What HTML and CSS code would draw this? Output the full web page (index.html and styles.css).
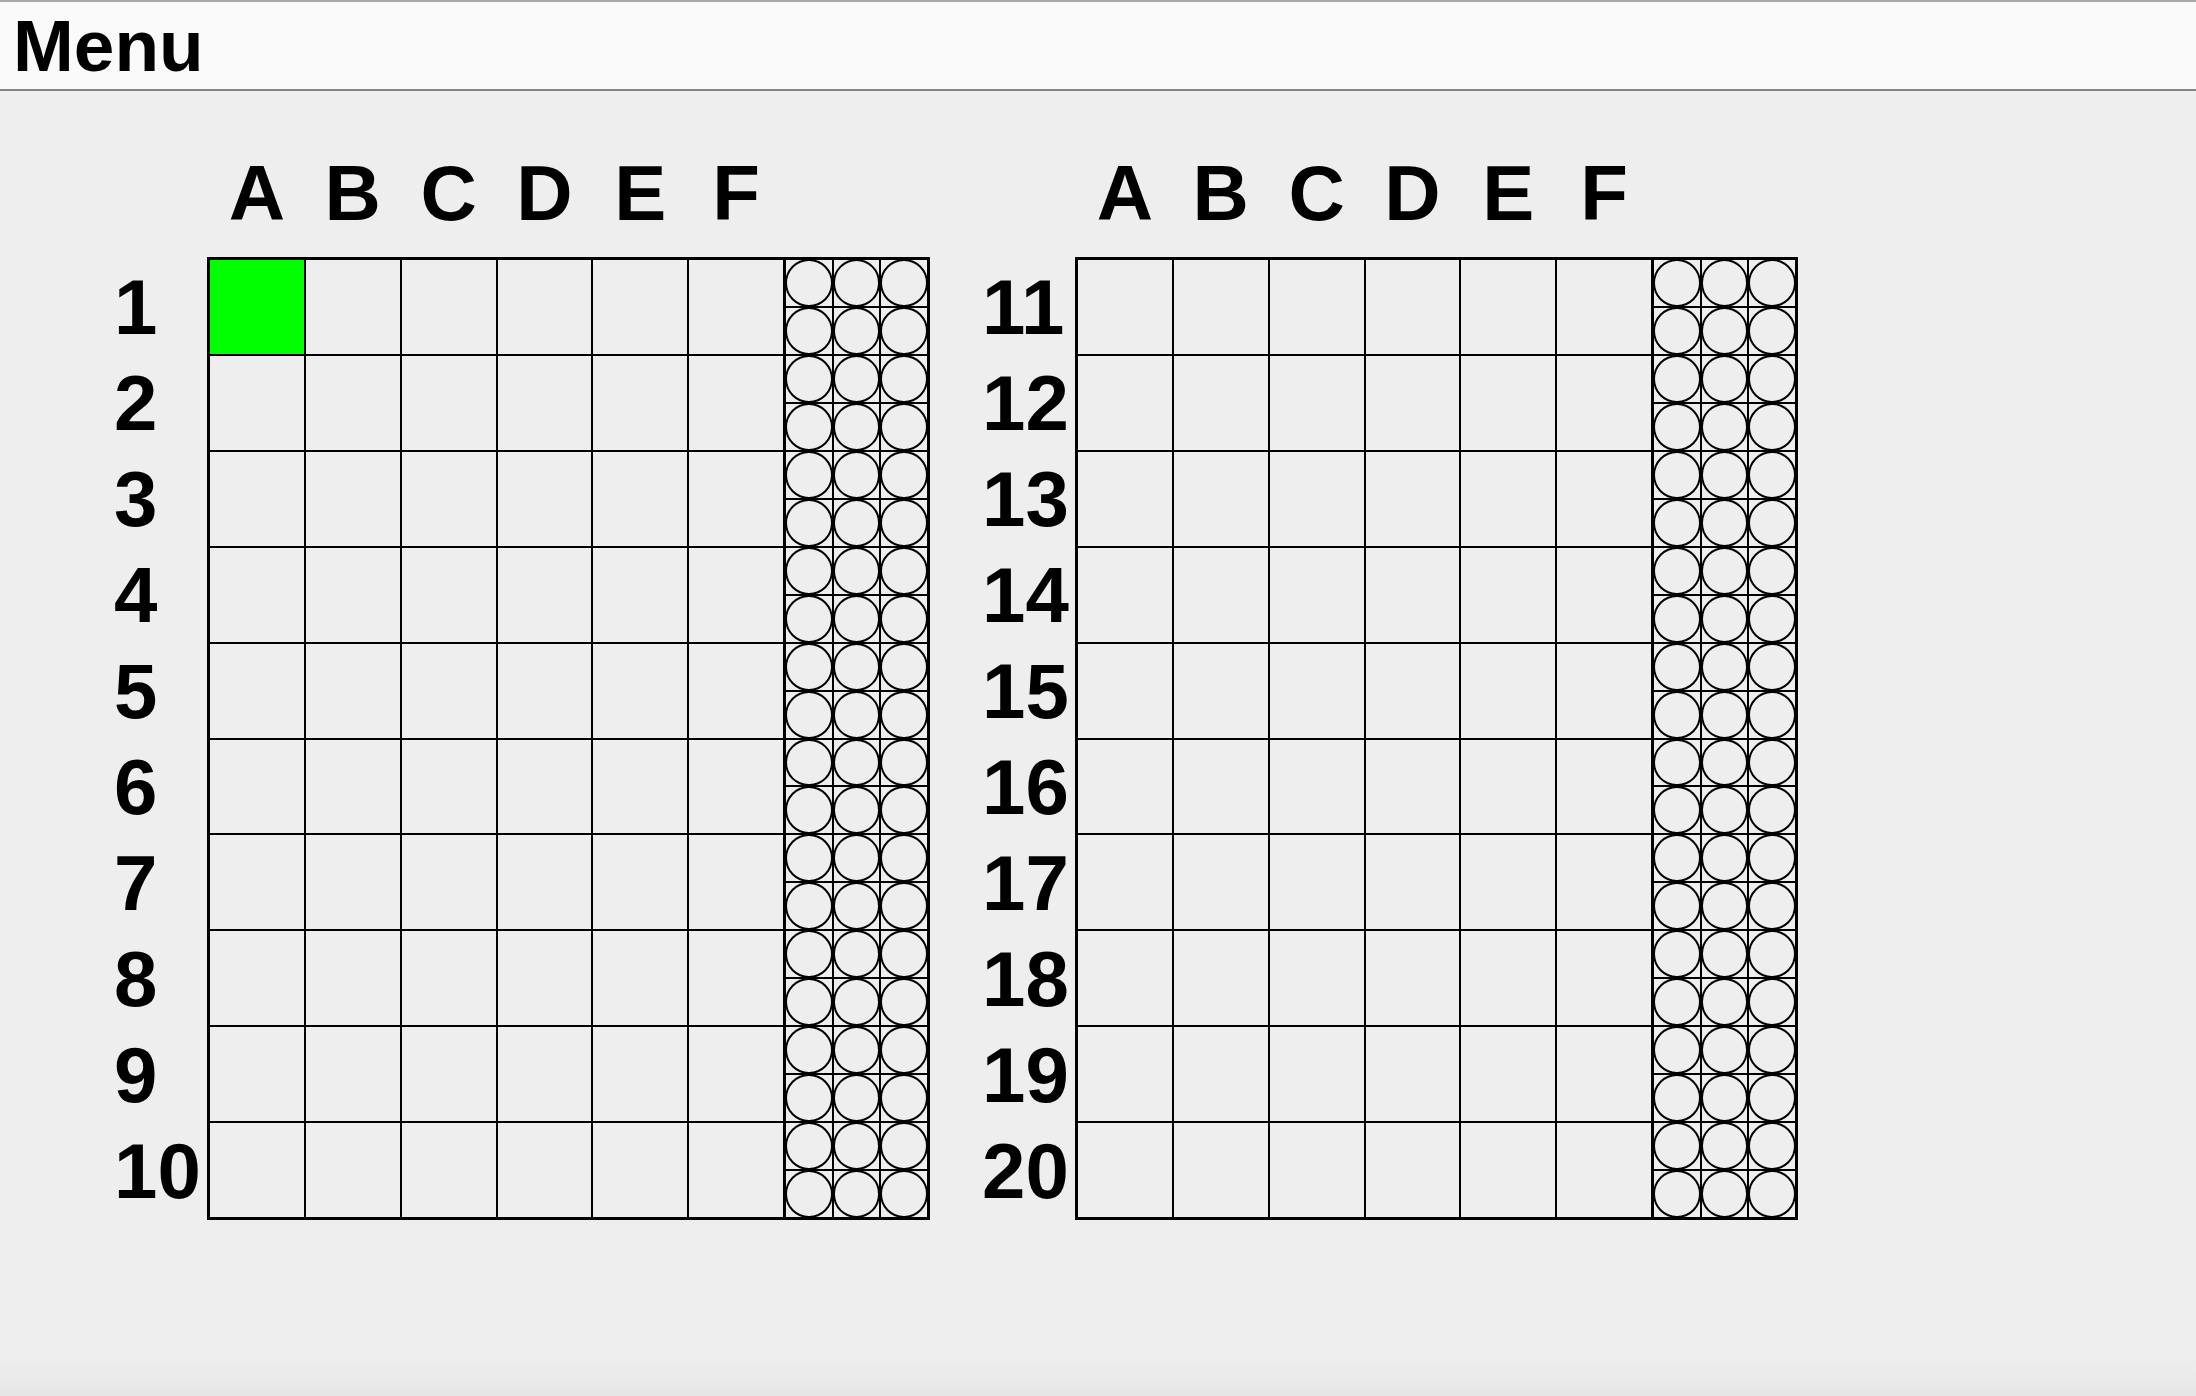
FILE: index.html
```html
<!DOCTYPE html>
<html lang="en">

<head>
    <meta charset="UTF-8">
    <meta name="viewport" content="width=device-width, initial-scale=1.0">
    <title>Board</title>
    <link rel="stylesheet" href="styles.css">
</head>

<body>
    <div class="menubar">Menu</div>
    <div class="main">
        <div class="panel">
            <div class="cols">
                <span>A</span><span>B</span><span>C</span><span>D</span><span>E</span><span>F</span>
            </div>
            <div class="rows">
                <span>1</span><span>2</span><span>3</span><span>4</span><span>5</span>
                <span>6</span><span>7</span><span>8</span><span>9</span><span>10</span>
            </div>
            <div class="board">
                <div class="cells" data-active="0"></div>
                <div class="slots"></div>
            </div>
        </div>
        <div class="panel">
            <div class="cols">
                <span>A</span><span>B</span><span>C</span><span>D</span><span>E</span><span>F</span>
            </div>
            <div class="rows">
                <span>11</span><span>12</span><span>13</span><span>14</span><span>15</span>
                <span>16</span><span>17</span><span>18</span><span>19</span><span>20</span>
            </div>
            <div class="board">
                <div class="cells"></div>
                <div class="slots"></div>
            </div>
        </div>
    </div>
    <script>
        const CELL_COUNT = 60;
        const SLOT_COUNT = 60;

        document.querySelectorAll('.cells').forEach(grid => {
            const active = grid.dataset.active;
            for (let i = 0; i < CELL_COUNT; i++) {
                const cell = document.createElement('div');
                cell.className = 'cell';
                if (active !== undefined && Number(active) === i) {
                    cell.classList.add('active');
                }
                grid.appendChild(cell);
            }
        });

        document.querySelectorAll('.slots').forEach(column => {
            for (let i = 0; i < SLOT_COUNT; i++) {
                const slot = document.createElement('div');
                slot.className = 'slot';
                column.appendChild(slot);
            }
        });
    </script>
</body>

</html>
```

FILE: styles.css
```css
body {
    font-family: 'Liberation Sans', Arial, sans-serif;
    font-weight: bold;
    color: #000;
    background: linear-gradient(to bottom, #eeeeee calc(100% - 40px), #e6e6e6);
    margin: 0;
    padding: 0;
    min-height: 100vh;
}

.menubar {
    height: 87px;
    line-height: 87px;
    font-size: 73px;
    padding-left: 13px;
    background-color: #fafafa;
    border-top: 2px solid #a9a9a9;
    border-bottom: 2px solid #848484;
}

.main {
    display: flex;
    gap: 47px;
    padding: 57px 0 0 109px;
}

.panel {
    display: grid;
    grid-template-columns: 98px 723px;
    grid-template-rows: auto 963px;
}

.cols {
    grid-column: 2;
    grid-row: 1;
    display: grid;
    grid-template-columns: repeat(6, 1fr);
    gap: 2px;
    width: 573px;
    margin: 0 0 19px 3px;
    font-size: 78px;
    line-height: 90px;
    text-align: center;
}

.rows {
    grid-column: 1;
    grid-row: 2;
    display: grid;
    grid-template-rows: repeat(10, 1fr);
    gap: 2px;
    padding: 3px 0 3px 5px;
    align-items: center;
    font-size: 78px;
    line-height: 94px;
}

.board {
    grid-column: 2;
    grid-row: 2;
    display: flex;
    border: 3px solid #000;
}

.cells {
    width: 573px;
    display: grid;
    grid-template-columns: repeat(6, 1fr);
    grid-template-rows: repeat(10, 1fr);
    gap: 2px;
    background-color: #000;
}

.cell {
    background-color: #eeeeee;
}

.cell.active {
    background-color: #00ff00;
}

.slots {
    flex: 1;
    display: grid;
    grid-template-columns: repeat(3, 1fr);
    grid-template-rows: repeat(20, 1fr);
    gap: 2px;
    border-left: 3px solid #000;
    background-color: #000;
}

.slot {
    background-color: #eeeeee;
}

.slot::before {
    content: '';
    display: block;
    box-sizing: border-box;
    margin: -1px;
    height: calc(100% + 2px);
    border: 2px solid #000;
    border-radius: 50%;
}
```
